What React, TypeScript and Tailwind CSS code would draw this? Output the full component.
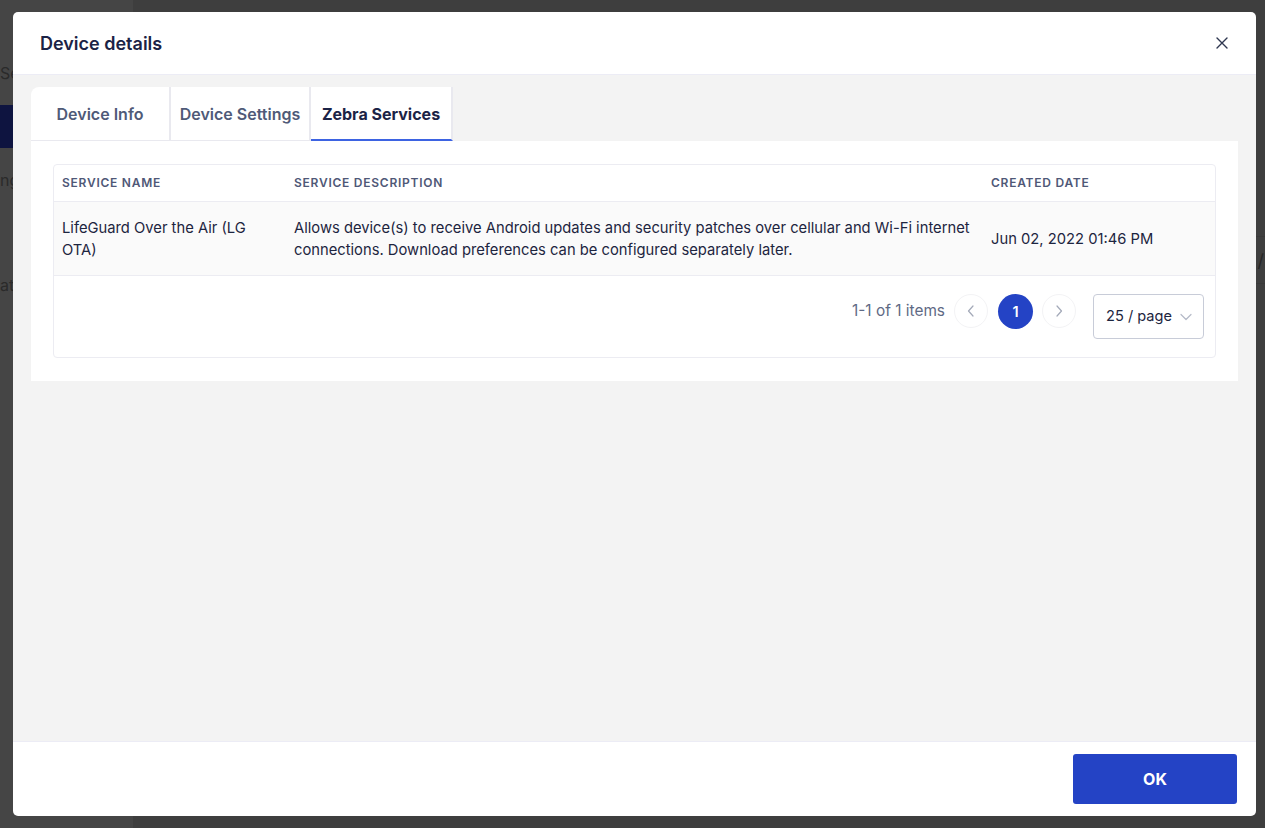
import React from "react";

function XIcon() {
  return (
    <svg width="14" height="14" viewBox="0 0 14 14" fill="none">
      <path d="M2 2L12 12M12 2L2 12" stroke="#2f3750" strokeWidth="1.4" strokeLinecap="round" />
    </svg>
  );
}

function Chevron({ dir }: { dir: "left" | "right" | "down" }) {
  if (dir === "down") {
    return (
      <svg width="12" height="8" viewBox="0 0 12 8" fill="none">
        <path d="M1 1.5L6 6.5L11 1.5" stroke="#b5bac8" strokeWidth="1.2" strokeLinecap="round" strokeLinejoin="round" />
      </svg>
    );
  }
  return (
    <svg width="8" height="12" viewBox="0 0 8 12" fill="none">
      <path
        d={dir === "left" ? "M6 1L1.5 6L6 11" : "M2 1L6.5 6L2 11"}
        stroke="#a3a9b8"
        strokeWidth="1.2"
        strokeLinecap="round"
        strokeLinejoin="round"
      />
    </svg>
  );
}

export default function App() {
  return (
    <div
      className="relative h-[828px] w-full overflow-hidden bg-[#3f3f3f]"
      style={{ fontFamily: "Inter, 'Noto Sans', sans-serif" }}
    >
      {/* underlying page (dimmed) */}
      <div className="flex h-full">
        <div className="flex w-[133px] flex-col bg-[#454545] text-[16px] text-[#2a2a2a]">
          <div className="h-[62px]" />
          <div className="h-[22px] leading-[22px]">Se</div>
          <div className="h-[21px]" />
          <div className="h-[43px] bg-[#0e1440]" />
          <div className="h-[21px]" />
          <div className="h-[22px] leading-[22px]">ng</div>
          <div className="h-[83px]" />
          <div className="h-[22px] leading-[22px]">at</div>
        </div>
        <div className="flex flex-1 flex-col bg-[#3e3e3e]">
          <div className="h-[236px]" />
          <div className="flex h-[48px] items-center justify-end border-y border-[#393939] pr-[1px] text-[18px] text-[#262626]">
            /
          </div>
        </div>
      </div>

      {/* modal */}
      <div className="absolute left-[13px] top-[12px] flex h-[804px] w-[1243px] flex-col overflow-hidden rounded-[5px] bg-white">
        {/* header */}
        <div className="flex h-[63px] shrink-0 items-center justify-between border-b border-[#ececf5] pl-[27px] pr-[24px]">
          <div className="text-[18px] font-semibold text-[#1b2346]">Device details</div>
          <button className="flex h-[20px] w-[20px] items-center justify-center">
            <XIcon />
          </button>
        </div>

        {/* body */}
        <div className="flex-1 bg-[#f3f3f3] px-[18px] pt-[12px]">
          {/* tabs */}
          <div className="flex h-[54px] items-stretch">
            <div className="flex w-[140px] items-center justify-center rounded-tl-[8px] border-b border-r-2 border-[#e9e9ef] bg-white text-[16px] font-semibold text-[#4f5a78]">
              Device Info
            </div>
            <div className="flex w-[140px] items-center justify-center border-b border-r-2 border-[#e9e9ef] bg-white text-[16px] font-semibold text-[#4f5a78]">
              Device Settings
            </div>
            <div className="flex w-[142px] items-center justify-center border-b-2 border-r-2 border-b-[#3d63e2] border-r-[#e9e9ef] bg-white pt-[1px] text-[16px] font-bold text-[#1b2346]">
              Zebra Services
            </div>
          </div>

          {/* panel */}
          <div className="bg-white p-[22px] pb-[23px] pt-[23px]">
            <div className="rounded-[4px] border border-[#ececf2]">
              {/* header row */}
              <div className="grid h-[37px] grid-cols-[231px_697px_1fr] items-center border-b border-[#ececf2] text-[12px] font-semibold uppercase tracking-[0.75px] text-[#4f5877]">
                <div className="pl-[8px]">Service Name</div>
                <div className="pl-[9px]">Service Description</div>
                <div className="pl-[9px]">Created Date</div>
              </div>
              {/* data row */}
              <div className="grid h-[74px] grid-cols-[231px_697px_1fr] items-center border-b border-[#ececf2] bg-[#fafafa] text-[14.75px] leading-[22px] text-[#1d2540]">
                <div className="pl-[8px] pr-[20px]">LifeGuard Over the Air (LG OTA)</div>
                <div className="pl-[9px] pr-[6px]">
                  Allows device(s) to receive Android updates and security patches over cellular and Wi-Fi internet
                  connections. Download preferences can be configured separately later.
                </div>
                <div className="pl-[9px]">Jun 02, 2022 01:46 PM</div>
              </div>
              {/* pagination */}
              <div className="flex h-[81px] items-start justify-end pr-[11px] pt-[18px]">
                <div className="mr-[9px] flex h-[34px] items-center text-[15.4px] text-[#5f6a85]">1-1 of 1 items</div>
                <div className="flex h-[34px] w-[34px] items-center justify-center rounded-full border border-[#f3f3f5]">
                  <Chevron dir="left" />
                </div>
                <div className="ml-[10px] flex h-[35px] w-[35px] items-center justify-center rounded-full bg-[#2443c5] text-[14.5px] font-semibold text-white">
                  1
                </div>
                <div className="ml-[9px] flex h-[34px] w-[34px] items-center justify-center rounded-full border border-[#f3f3f5]">
                  <Chevron dir="right" />
                </div>
                <div className="ml-[17px] flex h-[45px] w-[111px] items-center justify-between rounded-[4px] border border-[#c8ccd8] pl-[12px] pr-[11px] text-[14.6px] text-[#1d2540]">
                  <span>25 / page</span>
                  <Chevron dir="down" />
                </div>
              </div>
            </div>
          </div>
        </div>

        {/* footer */}
        <div className="flex h-[75px] shrink-0 items-start justify-end border-t border-[#ececf5] pr-[19px] pt-[12px]">
          <button className="flex h-[50px] w-[164px] items-center justify-center rounded-[3px] bg-[#2443c5] text-[16px] font-bold text-white">
            OK
          </button>
        </div>
      </div>
    </div>
  );
}
